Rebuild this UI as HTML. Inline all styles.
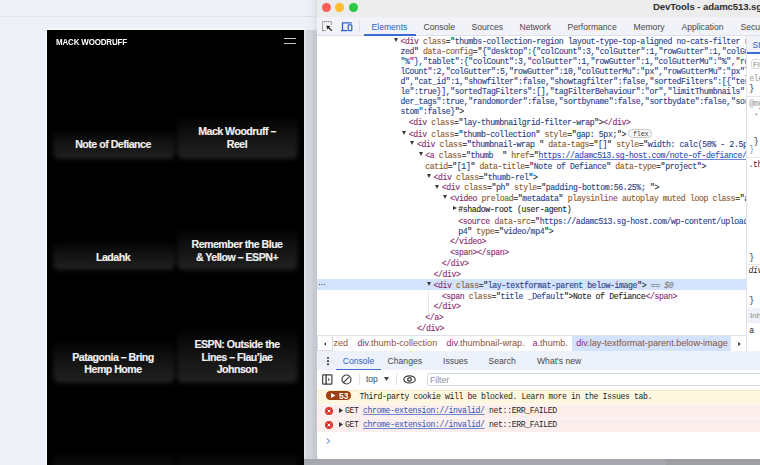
<!DOCTYPE html>
<html><head><meta charset="utf-8">
<style>
*{margin:0;padding:0;box-sizing:border-box}
html,body{width:760px;height:465px;overflow:hidden;background:#eef1f7;font-family:"Liberation Sans",sans-serif}
.abs{position:absolute}
#page{position:absolute;left:0;top:0;width:317px;height:465px;background:#eef1f7}
#hl1{position:absolute;left:0;top:16px;width:313px;height:1px;background:#e1e5ec}
#hl2{position:absolute;left:44px;top:27px;width:263px;height:440px;background:#f6f7fb;border:1px solid #e9ecf3;border-bottom:none}
#phone{position:absolute;left:47px;top:30px;width:257px;height:435px;background:#000;overflow:hidden}
#brand{position:absolute;left:8.5px;top:6.6px;color:#fff;font-weight:bold;font-size:8.9px;letter-spacing:-0.2px;white-space:nowrap;transform:scaleX(0.9);transform-origin:0 0}
.burger{position:absolute;left:237.3px;width:11.7px;height:1.2px;background:#c9c9c9}
.glow{position:absolute;border-radius:6px;background:linear-gradient(to bottom,rgba(255,255,255,0.01),rgba(255,255,255,0.075) 45%,rgba(255,255,255,0.13));filter:blur(2px)}
.tt{position:absolute;color:#f2f2f2;font-weight:bold;font-size:10.6px;letter-spacing:-0.5px;line-height:12.4px;text-align:center;white-space:nowrap;-webkit-text-stroke:0.15px #f2f2f2}
#shadowstrip{position:absolute;left:304px;top:30px;width:13px;height:435px;background:linear-gradient(to right,#e4e6ea 0,#e4e6ea 1px,#d3d6dc 2px,#cfd2d8 8px,#c8cbd1 9px,#c3c6cc 13px)}
#shadowtop{position:absolute;left:304px;top:0;width:13px;height:30px;background:linear-gradient(to right,#eef1f7 0,#e9ecf2 8px,#dcdfe5 13px)}
#win{position:absolute;left:317px;top:0;width:460px;height:459px;background:#fff;border-bottom-left-radius:5px;overflow:hidden}
#bottomband{position:absolute;left:304px;top:459px;width:456px;height:6px;background:linear-gradient(to bottom,#a2a4aa,#a6a9af)}
#titlebar{position:absolute;left:0;top:0;width:100%;height:17px;background:#ececec}
.tl{position:absolute;top:3.2px;width:9px;height:9px;border-radius:50%}
#wtitle{position:absolute;left:336px;top:1px;font-size:9.6px;font-weight:bold;color:#2e2e2e;white-space:nowrap;letter-spacing:-0.1px}
#toolbar{position:absolute;left:0;top:17px;width:100%;height:19px;background:#f1f3f9;border-bottom:1px solid #dfe2ea}
.tab{position:absolute;top:4.5px;font-size:8.6px;color:#474747;white-space:nowrap}
#elements{position:absolute;left:0;top:36px;width:430px;height:299px;background:#fff;overflow:hidden}
.cl{position:absolute;font-family:"Liberation Mono",monospace;font-size:8.2px;letter-spacing:-0.386px;line-height:10px;white-space:pre;color:#1f1f1f;-webkit-text-stroke:0.12px currentColor}
.tg{color:#8a2c70}
.an{color:#8e5a30}
.av{color:#2b4285}
.eq{color:#808080;font-style:italic}
.lk{color:#2e52b0;text-decoration:underline;text-decoration-thickness:0.8px;text-decoration-color:#6d8ad0}
.tri{position:absolute;width:0;height:0;border-left:2.5px solid transparent;border-right:2.5px solid transparent;border-top:4.3px solid #3a3a3a}
.trir{position:absolute;width:0;height:0;border-top:2.5px solid transparent;border-bottom:2.5px solid transparent;border-left:4.3px solid #3a3a3a}
#sidebar{position:absolute;left:429px;top:36px;width:31px;height:315px;background:#fff;border-left:1px solid #dfe2ea}
#crumbs{position:absolute;left:0;top:335px;width:429px;height:16px;background:#fff;border-top:1px solid #dfe2ea;overflow:hidden}
.ex{color:#8d5238}
.cr{position:absolute;top:2.1px;font-size:9.1px;color:#8e2a78;white-space:nowrap}
#drawertabs{position:absolute;left:0;top:351px;width:100%;height:19px;background:#edf1fa}
.dt{position:absolute;top:4.8px;font-size:8.6px;color:#474747;white-space:nowrap}
#ctool{position:absolute;left:0;top:370px;width:100%;height:18px;background:#fff}
.sb{position:absolute;font-family:"Liberation Mono",monospace;font-size:8.2px;letter-spacing:-0.386px;line-height:10px;white-space:pre;color:#2a2a2a}
.msg{position:absolute;left:1px;width:100%;font-family:"Liberation Mono",monospace;font-size:8.2px;letter-spacing:-0.41px;white-space:pre;color:#1f1f1f}
</style></head><body>
<div id="page">
  <div id="hl1"></div>
  <div id="hl2"></div>
  <div id="phone">
    <div id="brand">MACK WOODRUFF</div>
    <div class="burger" style="top:7.8px"></div>
    <div class="burger" style="top:12.6px"></div>
    <div class="glow" style="left:5.5px;top:99.5px;width:122.5px;height:29px"></div>
    <div class="glow" style="left:129.5px;top:88.4px;width:121px;height:40.6px"></div>
    <div class="tt" style="left:6px;width:120px;top:107.8px">Note of Defiance</div>
    <div class="tt" style="left:130px;width:120px;top:95.4px">Mack Woodruff &ndash;<br>Reel</div>
    <div class="glow" style="left:5.5px;top:212.4px;width:122.5px;height:27.6px"></div>
    <div class="glow" style="left:129.5px;top:199.5px;width:121px;height:40.5px"></div>
    <div class="tt" style="left:6px;width:120px;top:220.8px">Ladahk</div>
    <div class="tt" style="left:130px;width:120px;top:208.4px">Remember the Blue<br>&amp; Yellow &ndash; ESPN+</div>
    <div class="glow" style="left:5.5px;top:312.4px;width:122.5px;height:40.5px"></div>
    <div class="glow" style="left:129.5px;top:299.5px;width:121px;height:53.5px"></div>
    <div class="tt" style="left:6px;width:120px;top:320.8px">Patagonia &ndash; Bring<br>Hemp Home</div>
    <div class="tt" style="left:130px;width:120px;top:308.4px">ESPN: Outside the<br>Lines &ndash; Flau&rsquo;jae<br>Johnson</div>
    <div class="glow" style="left:5.5px;top:424px;width:122.5px;height:40px"></div>
    <div class="glow" style="left:129.5px;top:424px;width:121px;height:40px"></div>

  </div>
</div>
<div id="shadowstrip"></div><div id="shadowtop"></div><div class="abs" style="left:304px;top:16px;width:12px;height:1px;background:#d9dde4"></div>
<div id="bottomband"></div><div class="abs" style="left:666px;top:459px;width:94px;height:6px;background:#9e9fa2"></div>
<div id="win">
  <div id="titlebar">
    <div class="tl" style="left:4.5px;background:#fe5f57"></div>
    <div class="tl" style="left:18px;background:#febc2e"></div>
    <div class="tl" style="left:31.5px;background:#28c840"></div>
    <div id="wtitle">DevTools - adamc513.sg-host.com/</div>
  </div>
  <div id="toolbar">
    <svg class="abs" style="left:5.2px;top:4.2px" width="11" height="11" viewBox="0 0 11 11"><path d="M0.6 9.6V0.6H9.6V3.6M0.6 9.6H3.6" fill="none" stroke="#5a5a5a" stroke-width="1" stroke-dasharray="1.1 0.9"/><path d="M5.2 5.2L9.8 9.8" stroke="#2a2a2a" stroke-width="1.3"/><path d="M4.4 4.4L8.6 5.2L5.2 8.6Z" fill="#2a2a2a"/></svg>
    <svg class="abs" style="left:23.8px;top:4.8px" width="12" height="10" viewBox="0 0 12 10"><path d="M1.5 8.6V0.9H10.8" fill="none" stroke="#2f62c9" stroke-width="1.3"/><path d="M0 8.6H6.3" stroke="#2f62c9" stroke-width="1.3"/><rect x="7.2" y="2.9" width="3.6" height="5.7" rx="0.5" fill="none" stroke="#2f62c9" stroke-width="1.2"/></svg>
    <div class="abs" style="left:41.5px;top:4px;width:1px;height:11px;background:#dfe2ea"></div>
    <div class="tab" style="left:54.5px;color:#2f5fc0">Elements</div>
    <div class="abs" style="left:46.8px;top:17.2px;width:52px;height:1.4px;background:#3a6bd0"></div>
    <div class="tab" style="left:106.5px">Console</div>
    <div class="tab" style="left:154.5px">Sources</div>
    <div class="tab" style="left:202.5px">Network</div>
    <div class="tab" style="left:250.5px">Performance</div>
    <div class="tab" style="left:316.5px">Memory</div>
    <div class="tab" style="left:364.5px">Application</div>
    <div class="tab" style="left:423.5px">Security</div>
  </div>
  <div id="elements"></div>
  <div id="selrow" class="abs" style="left:0;top:279px;width:430px;height:10.5px;background:#d3e3fd"></div>
  <div class="abs" style="left:2px;top:283.6px;width:1.3px;height:1.3px;background:#555;box-shadow:2.4px 0 0 #555,4.8px 0 0 #555"></div>
  <div class="abs" style="left:110.5px;top:290.5px;width:1px;height:23px;background:#e6e6e6"></div>
  <div class="cl" style="left:83.40px;top:36.80px"><span class="tg">&lt;div</span> <span class="an">class</span>="<span class="av">thumbs-collection-region layout-type-top-aligned no-cats-filter r</span></div>
<div class="tri" style="left:76.80px;top:37.90px"></div>
<div class="cl" style="left:83.40px;top:46.60px"><span class="av">zed</span>" <span class="an">data-config</span>="<span class="av">{"desktop":{"colCount":3,"colGutter":1,"rowGutter":1,"colGu</span></div>
<div class="cl" style="left:83.40px;top:56.60px"><span class="av">"%"},"tablet":{"colCount":3,"colGutter":1,"rowGutter":1,"colGutterMu":"%","ro</span></div>
<div class="cl" style="left:83.40px;top:66.80px"><span class="av">lCount":2,"colGutter":5,"rowGutter":10,"colGutterMu":"px","rowGutterMu":"px"}</span></div>
<div class="cl" style="left:83.40px;top:77.00px"><span class="av">d","cat_id":1,"showfilter":false,"showtagfilter":false,"sortedFilters":[{"term</span></div>
<div class="cl" style="left:83.40px;top:87.10px"><span class="av">le":true}],"sortedTagFilters":[],"tagFilterBehaviour":"or","limitThumbnails":</span></div>
<div class="cl" style="left:83.40px;top:97.20px"><span class="av">der_tags":true,"randomorder":false,"sortbyname":false,"sortbydate":false,"sor</span></div>
<div class="cl" style="left:83.40px;top:107.30px"><span class="av">stom":false}</span>"&gt;</div>
<div class="cl" style="left:91.65px;top:118.40px"><span class="tg">&lt;div</span> <span class="an">class</span>="<span class="av">lay-thumbnailgrid-filter-wrap</span>"&gt;<span class="tg">&lt;/div&gt;</span></div>
<div class="cl" style="left:91.65px;top:129.60px"><span class="tg">&lt;div</span> <span class="an">class</span>="<span class="av">thumb-collection</span>" <span class="an">style</span>="<span class="av">gap: 5px;</span>"&gt;</div>
<div class="tri" style="left:85.05px;top:130.70px"></div>
<div class="cl" style="left:99.90px;top:140.30px"><span class="tg">&lt;div</span> <span class="an">class</span>="<span class="av">thumbnail-wrap </span>" <span class="an">data-tags</span>="<span class="av">[]</span>" <span class="an">style</span>="<span class="av">width: calc(50% - 2.5px);</span></div>
<div class="tri" style="left:93.30px;top:141.40px"></div>
<div class="cl" style="left:108.15px;top:151.30px"><span class="tg">&lt;a</span> <span class="an">class</span>="<span class="av">thumb  </span>" <span class="an">href</span>="<span class="lk">https://adamc513.sg-host.com/note-of-defiance/</span>" data-</div>
<div class="tri" style="left:101.55px;top:152.40px"></div>
<div class="cl" style="left:108.15px;top:161.80px"><span class="an">catid</span>="<span class="av">[1]</span>" <span class="an">data-title</span>="<span class="av">Note of Defiance</span>" <span class="an">data-type</span>="<span class="av">project</span>"&gt;</div>
<div class="cl" style="left:116.40px;top:172.50px"><span class="tg">&lt;div</span> <span class="an">class</span>="<span class="av">thumb-rel</span>"&gt;</div>
<div class="tri" style="left:109.80px;top:173.60px"></div>
<div class="cl" style="left:124.65px;top:183.40px"><span class="tg">&lt;div</span> <span class="an">class</span>="<span class="av">ph</span>" <span class="an">style</span>="<span class="av">padding-bottom:56.25%; </span>"&gt;</div>
<div class="tri" style="left:118.05px;top:184.50px"></div>
<div class="cl" style="left:132.90px;top:194.00px"><span class="tg">&lt;video</span> <span class="an">preload</span>="<span class="av">metadata</span>" <span class="an">playsinline autoplay muted loop class</span>="<span class="av">a</span></div>
<div class="tri" style="left:126.30px;top:195.10px"></div>
<div class="cl" style="left:141.15px;top:204.80px">#shadow-root (user-agent)</div>
<div class="trir" style="left:135.55px;top:206.10px"></div>
<div class="cl" style="left:141.15px;top:216.50px"><span class="tg">&lt;source</span> <span class="an">data-src</span>="<span class="av">https://adamc513.sg-host.com/wp-content/uploads/</span></div>
<div class="cl" style="left:141.15px;top:226.70px"><span class="av">p4</span>" <span class="an">type</span>="<span class="av">video/mp4</span>"&gt;</div>
<div class="cl" style="left:132.90px;top:237.20px"><span class="tg">&lt;/video&gt;</span></div>
<div class="cl" style="left:132.90px;top:248.30px"><span class="tg">&lt;span&gt;&lt;/span&gt;</span></div>
<div class="cl" style="left:124.65px;top:259.10px"><span class="tg">&lt;/div&gt;</span></div>
<div class="cl" style="left:116.40px;top:269.80px"><span class="tg">&lt;/div&gt;</span></div>
<div class="cl" style="left:116.40px;top:280.90px"><span class="tg">&lt;div</span> <span class="an">class</span>="<span class="av">lay-textformat-parent below-image</span>"&gt;<span class="eq"> == $0</span></div>
<div class="tri" style="left:109.80px;top:282.00px"></div>
<div class="cl" style="left:124.65px;top:291.80px"><span class="tg">&lt;span</span> <span class="an">class</span>="<span class="av">title _Default</span>"&gt;Note of Defiance<span class="tg">&lt;/span&gt;</span></div>
<div class="cl" style="left:116.40px;top:302.40px"><span class="tg">&lt;/div&gt;</span></div>
<div class="cl" style="left:108.15px;top:313.30px"><span class="tg">&lt;/a&gt;</span></div>
<div class="cl" style="left:99.90px;top:324.30px"><span class="tg">&lt;/div&gt;</span></div>
  <div class="abs" style="left:311.4px;top:129.3px;width:23.3px;height:8.4px;border:1px solid #c9c9cc;border-radius:4.2px;background:#f8f8f8"></div>
  <div class="abs" style="left:316px;top:129.6px;font-family:'Liberation Mono',monospace;font-size:6.8px;letter-spacing:-0.25px;color:#3c3c3c;line-height:8px">flex</div>
  <div id="sidebar">
    <div class="abs" style="left:0;top:0;width:30px;height:18px;background:#f1f3f9;border-bottom:1px solid #dfe2ea"></div>
    <div class="abs" style="left:5.5px;top:4px;font-size:8.6px;color:#2f5fc0">Styles</div>
    <div class="abs" style="left:0;top:16.4px;width:30px;height:1.4px;background:#3a6bd0"></div>
    <div class="abs" style="left:3.5px;top:23px;width:30px;height:9.7px;border:1px solid #d6d9e0;border-radius:3px"></div>
    <div class="abs" style="left:6px;top:23.6px;font-size:7.5px;color:#8a8a8a">Filter</div>
    <div class="sb" style="left:2.2px;top:38.3px;color:#9a9a9a">element.style {</div>
    <div class="sb" style="left:2.2px;top:47.9px">}</div>
    <div class="abs" style="left:0;top:60.4px;width:30px;height:1px;background:#e6e8ec"></div>
    <div class="sb" style="left:2.2px;top:62.9px;color:#9a9a9a">@media</div>
    <div class="sb" style="left:6.7px;top:71.6px">.lay</div>
    <div class="sb" style="left:6.7px;top:101.2px">}</div>
    <div class="sb" style="left:2.2px;top:108.9px;color:#8a8a8a">}</div>
    <div class="abs" style="left:0;top:121.4px;width:30px;height:1px;background:#e6e8ec"></div>
    <div class="sb" style="left:1.5px;top:124.4px">.thumb</div>
    <div class="sb" style="left:2.2px;top:216.5px">}</div>
    <div class="abs" style="left:0;top:227.7px;width:30px;height:1px;background:#e6e8ec"></div>
    <div class="sb" style="left:1.5px;top:230.1px;font-style:italic">div</div>
    <div class="sb" style="left:2.2px;top:260.4px">}</div>
    <div class="abs" style="left:0;top:271.6px;width:30px;height:15.4px;background:#eef1f7"></div>
    <div class="abs" style="left:3px;top:275.3px;font-size:8px;color:#8a8a8a">Inherited</div>
    <div class="sb" style="left:2.2px;top:290.1px">a</div>
  </div>
  <div id="crumbs">
    <div class="abs" style="left:0;top:-1px;width:15.5px;height:16px;background:#fff;border:1px solid #d9dce3"></div>
    <svg class="abs" style="left:6.8px;top:5.6px" width="2.5" height="4" viewBox="0 0 2.5 4"><path d="M2.5 0L0 2L2.5 4Z" fill="#222"/></svg>
    <div class="cr" style="left:16.5px;color:#94582a">zed</div>
        <div class="cr" style="left:40.5px">div<span class="ex">.thumb-collection</span></div>
    <div class="cr" style="left:129.5px">div<span class="ex">.thumbnail-wrap.</span></div>
    <div class="cr" style="left:215.5px">a<span class="ex">.thumb.</span></div>
    <div class="abs" style="left:255px;top:0;width:158px;height:15px;background:#d3e3fd"></div>
    <div class="cr" style="left:259.3px">div<span class="ex">.lay-textformat-parent.below-image</span></div>
    <div class="abs" style="left:413px;top:0;width:17px;height:15px;background:#fff;border-left:1px solid #e3e6ec"></div>
    <svg class="abs" style="left:420.5px;top:5.5px" width="3" height="4" viewBox="0 0 3 4"><path d="M0 0L3 2L0 4Z" fill="#444"/></svg>
  </div>
  <div id="drawertabs">
    <div class="abs" style="left:9.7px;top:6px;width:1.9px;height:1.9px;background:#3a3a3a;border-radius:50%;box-shadow:0 3.1px 0 #3a3a3a,0 6.2px 0 #3a3a3a"></div>
    <div class="dt" style="left:25.7px;color:#2f5fc0">Console</div>
    <div class="abs" style="left:19px;top:17.8px;width:45px;height:1.3px;background:#3f70cf"></div>
    <div class="dt" style="left:70.6px">Changes</div>
    <div class="dt" style="left:126px">Issues</div>
    <div class="dt" style="left:171.5px">Search</div>
    <div class="dt" style="left:220px">What's new</div>
  </div>
  <div id="ctool">
    <svg class="abs" style="left:5.2px;top:3.5px" width="11" height="11" viewBox="0 0 11 11"><rect x="0.7" y="0.8" width="9.2" height="9.4" rx="0.6" fill="none" stroke="#3f3f3f" stroke-width="1.2"/><line x1="4.1" y1="0.8" x2="4.1" y2="10.2" stroke="#3f3f3f" stroke-width="1.4"/><path d="M6.2 3.8 L7.8 5.5 L6.2 7.2Z" fill="#3f3f3f"/></svg>
    <svg class="abs" style="left:23.8px;top:3.6px" width="11" height="11" viewBox="0 0 11 11"><circle cx="5.5" cy="5.5" r="4.5" fill="none" stroke="#3f3f3f" stroke-width="1.2"/><line x1="2.4" y1="8.6" x2="8.6" y2="2.4" stroke="#3f3f3f" stroke-width="1.2"/></svg>
    <div class="abs" style="left:42px;top:3px;width:1px;height:12px;background:#dfe2ea"></div>
    <div class="abs" style="left:48.9px;top:4px;font-size:8.6px;color:#474747">top</div>
    <svg class="abs" style="left:67px;top:7px" width="5" height="4" viewBox="0 0 5 4"><path d="M0 0H5L2.5 4Z" fill="#474747"/></svg>
    <div class="abs" style="left:79px;top:3px;width:1px;height:12px;background:#dfe2ea"></div>
    <svg class="abs" style="left:85.5px;top:4.5px" width="13" height="9" viewBox="0 0 13 9"><ellipse cx="6.5" cy="4.4" rx="5.7" ry="3.6" fill="none" stroke="#3f3f3f" stroke-width="1.2"/><circle cx="6.5" cy="4.4" r="1.8" fill="none" stroke="#3f3f3f" stroke-width="1.3"/></svg>
    <div class="abs" style="left:110px;top:3px;width:340px;height:13px;border:1px solid #d6d9e0;border-radius:2px;background:#fff"></div>
    <div class="abs" style="left:113px;top:4.5px;font-size:8.6px;color:#8f8f8f">Filter</div>
  </div>
  <div class="abs" style="left:0;top:389.5px;width:460px;height:14px;background:#fef7e0;border-top:1px solid #f5ebc4"></div>
  <div class="abs" style="left:9.3px;top:391.3px;width:25px;height:8.6px;border-radius:4.3px;background:#9f3e0e"></div>
  <svg class="abs" style="left:14px;top:393.3px" width="4.5" height="5" viewBox="0 0 4.5 5"><path d="M0 0L4.5 2.5L0 5Z" fill="#fff"/></svg>
  <div class="abs" style="left:22px;top:390.8px;font-size:8.4px;font-weight:bold;color:#fff">53</div>
  <div class="msg" style="left:42.4px;top:391.6px">Third-party cookie will be blocked. Learn more in the Issues tab.</div>
  <div class="abs" style="left:0;top:404px;width:460px;height:13.5px;background:#fdeeee;border-top:1px solid #fff8f8"></div>
  <div class="abs" style="left:0;top:418px;width:460px;height:13.5px;background:#fdeeee;border-top:1px solid #fff8f8"></div>
  <svg class="abs" style="left:8px;top:406.5px" width="8" height="8" viewBox="0 0 8 8"><circle cx="4" cy="4" r="4" fill="#dc362e"/><path d="M2.6 2.6L5.4 5.4M5.4 2.6L2.6 5.4" stroke="#fff" stroke-width="1"/></svg>
  <svg class="abs" style="left:8px;top:420.5px" width="8" height="8" viewBox="0 0 8 8"><circle cx="4" cy="4" r="4" fill="#dc362e"/><path d="M2.6 2.6L5.4 5.4M5.4 2.6L2.6 5.4" stroke="#fff" stroke-width="1"/></svg>
  <svg class="abs" style="left:22px;top:408px" width="4" height="5" viewBox="0 0 4 5"><path d="M0 0L4 2.5L0 5Z" fill="#333"/></svg>
  <svg class="abs" style="left:22px;top:422px" width="4" height="5" viewBox="0 0 4 5"><path d="M0 0L4 2.5L0 5Z" fill="#333"/></svg>
  <div class="msg" style="left:28px;top:405.6px">GET <span class="lk">chrome-extension://invalid/</span> net::ERR_FAILED</div>
  <div class="msg" style="left:28px;top:419.6px">GET <span class="lk">chrome-extension://invalid/</span> net::ERR_FAILED</div>
  <svg class="abs" style="left:8.5px;top:437.5px" width="5" height="6" viewBox="0 0 5 6"><path d="M0.8 0.6L3.8 3L0.8 5.4" fill="none" stroke="#4a74c4" stroke-width="1"/></svg>
</div>
</body></html>
